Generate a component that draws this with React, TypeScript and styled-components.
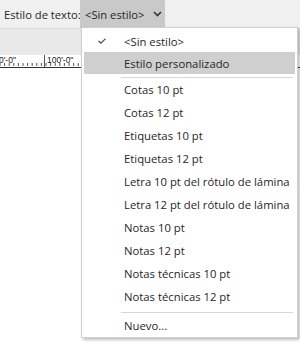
import React from "react";
import styled, { createGlobalStyle } from "styled-components";

const Global = createGlobalStyle`
  html, body { margin: 0; padding: 0; }
  body { width: 300px; height: 342px; overflow: hidden; background: #ffffff;
    font-family: "Open Sans", "Noto Sans", sans-serif; }
`;

const Page = styled.div`
  position: relative;
  width: 300px;
  height: 342px;
  display: flex;
  flex-direction: column;
`;

const Toolbar = styled.div`
  height: 28px;
  background: #f0f0f0;
  display: flex;
  align-items: stretch;
  padding-left: 4px;
  font-size: 11.2px;
  color: #262626;
`;

const Label = styled.span`
  display: flex;
  align-items: center;
  width: 76px;
  flex-shrink: 0;
  white-space: nowrap;
`;

const DropButton = styled.div`
  width: 85px;
  flex-shrink: 0;
  background: #c9c9c9;
  display: flex;
  align-items: center;
  justify-content: space-between;
  padding: 0 3px 0 5px;
  box-sizing: border-box;
  white-space: nowrap;
`;

const Band = styled.div`
  height: 27px;
  background: #e9e9e9;
  border-top: 1px solid #dcdcdc;
  box-sizing: border-box;
`;

const Ruler = styled.div`
  height: 12px;
  background: #ffffff;
  border-bottom: 1px solid #333;
  display: flex;
  font-family: "Liberation Sans", sans-serif;
  font-size: 8.5px;
  color: #222;
  position: relative;
`;

const RulerLabel = styled.span<{ $w: number; $first?: boolean }>`
  width: ${(p) => p.$w}px;
  padding-left: ${(p) => (p.$first ? 0 : 2)}px;
  margin-left: ${(p) => (p.$first ? -1 : 0)}px;
  line-height: 10px;
  border-left: ${(p) => (p.$first ? "none" : "1px solid #555")};
`;

const Ticks = styled.svg`
  position: absolute;
  left: 0;
  bottom: 0;
`;

const Menu = styled.div`
  position: absolute;
  left: 81px;
  top: 27px;
  width: 217px;
  box-sizing: border-box;
  background: #ffffff;
  border: 1px solid #cfcfcf;
  box-shadow: 2px 2px 3px rgba(0, 0, 0, 0.25);
  padding: 2px 2px 1px 2px;
  font-size: 11.3px;
  color: #262626;
`;

const Item = styled.div<{ $h: number; $active?: boolean }>`
  height: ${(p) => p.$h}px;
  display: flex;
  align-items: center;
  background: ${(p) => (p.$active ? "#cfcfcf" : "transparent")};
  white-space: nowrap;
`;

const CheckCol = styled.span`
  width: 40px;
  flex-shrink: 0;
  display: flex;
  justify-content: center;
  padding-right: 4px;
  box-sizing: border-box;
`;

const Sep = styled.div<{ $top: number; $bottom: number }>`
  height: 1px;
  background: #d6d6d6;
  margin: ${(p) => p.$top}px 2px ${(p) => p.$bottom}px 37px;
`;

const items = [
  "Cotas 10 pt",
  "Cotas 12 pt",
  "Etiquetas 10 pt",
  "Etiquetas 12 pt",
  "Letra 10 pt del rótulo de lámina",
  "Letra 12 pt del rótulo de lámina",
  "Notas 10 pt",
  "Notas 12 pt",
  "Notas técnicas 10 pt",
  "Notas técnicas 12 pt",
];

export default function App() {
  const ticks: React.ReactElement[] = [];
  for (let x = 0; x < 80; x += 4.6) {
    ticks.push(<line key={x} x1={x} y1={3} x2={x} y2={0} stroke="#555" strokeWidth={1} />);
  }
  return (
    <Page>
      <Global />
      <Toolbar>
        <Label>Estilo de texto:</Label>
        <DropButton>
          <span>&lt;Sin estilo&gt;</span>
          <svg width="9" height="6" viewBox="0 0 9 6">
            <path d="M1 1 L4.5 4.5 L8 1" fill="none" stroke="#333" strokeWidth="1.6" />
          </svg>
        </DropButton>
      </Toolbar>
      <Band />
      <Ruler>
        <RulerLabel $w={45} $first>0'-0"</RulerLabel>
        <RulerLabel $w={40}>100'-0"</RulerLabel>
        <Ticks width="80" height="4">{ticks}</Ticks>
      </Ruler>
      <Menu>
        <Item $h={22}>
          <CheckCol>
            <svg width="8" height="6" viewBox="0 0 8 6">
              <path d="M0.5 3 L3 5.2 L7.5 0.7" fill="none" stroke="#444" strokeWidth="1.1" />
            </svg>
          </CheckCol>
          &lt;Sin estilo&gt;
        </Item>
        <Item $h={22} $active>
          <CheckCol />
          Estilo personalizado
        </Item>
        <Sep $top={3} $bottom={0} />
        {items.map((t) => (
          <Item key={t} $h={23}>
            <CheckCol />
            {t}
          </Item>
        ))}
        <Sep $top={4} $bottom={2} />
        <Item $h={21}>
          <CheckCol />
          Nuevo...
        </Item>
      </Menu>
    </Page>
  );
}
